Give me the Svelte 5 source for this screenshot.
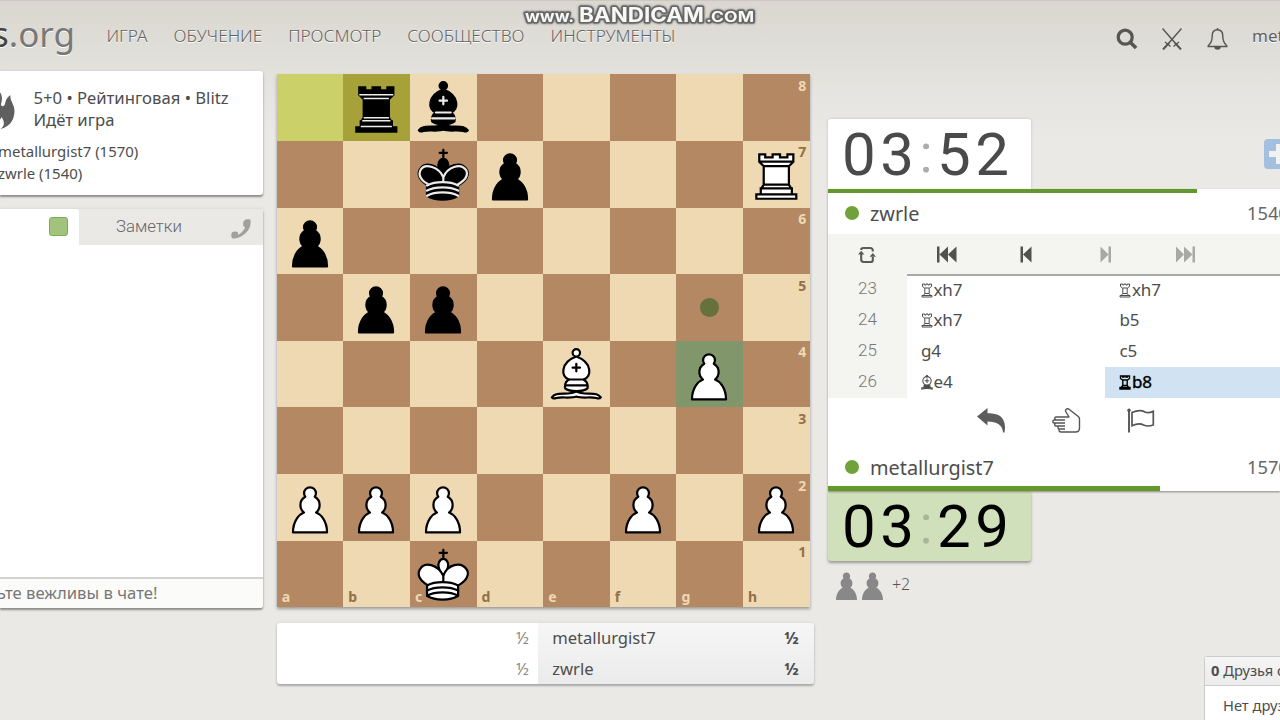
<script>
  const pawn = 'M22 9c-2.21 0-4 1.79-4 4 0 .89.29 1.71.78 2.38-1.95 1.12-3.28 3.21-3.28 5.62 0 2.03.94 3.84 2.41 5.03-3 1.06-7.41 5.55-7.41 13.47h23c0-7.92-4.41-12.41-7.41-13.47 1.47-1.19 2.41-3 2.41-5.03 0-2.41-1.33-4.5-3.28-5.62.49-.67.78-1.49.78-2.38 0-2.21-1.79-4-4-4z';
  const pieces = {
    b8: 'bR', c8: 'bB', c7: 'bK', d7: 'bP', h7: 'wR', a6: 'bP', b5: 'bP', c5: 'bP',
    e4: 'wB', g4: 'wP', a2: 'wP', b2: 'wP', c2: 'wP', f2: 'wP', h2: 'wP', c1: 'wK'
  };
  const files = ['a', 'b', 'c', 'd', 'e', 'f', 'g', 'h'];
  const squares = [8, 7, 6, 5, 4, 3, 2, 1].flatMap((r) =>
    files.map((f, i) => ({ key: f + r, dark: (i + r) % 2 === 1, file: r === 1 ? f : '', rank: f === 'h' ? r : '' }))
  );
  const nav = ['ИГРА', 'ОБУЧЕНИЕ', 'ПРОСМОТР', 'СООБЩЕСТВО', 'ИНСТРУМЕНТЫ'];
  const moves = [
    { n: 23, cells: [['R', 'xh7'], ['R', 'xh7']] },
    { n: 24, cells: [['R', 'xh7'], ['', 'b5']] },
    { n: 25, cells: [['', 'g4'], ['', 'c5']] },
    { n: 26, cells: [['B', 'e4'], ['R', 'b8']] }
  ];
</script>

<div class="page">
  <svg class="watermark" width="240" height="30" viewBox="0 0 240 30">
    <g class="wm">
      <text x="6" y="21.5" font-size="15" textLength="49" lengthAdjust="spacingAndGlyphs">www.</text>
      <text x="60" y="22" font-size="20" textLength="125" lengthAdjust="spacingAndGlyphs">BANDICAM</text>
      <text x="187" y="21.5" font-size="14" textLength="48" lengthAdjust="spacingAndGlyphs">.COM</text>
    </g>
  </svg>

  <header>
    <div class="logo"><b>s</b>.org</div>
    <nav>{#each nav as n}<span>{n}</span>{/each}</nav>
    <div class="tools">
      <svg width="22" height="22" viewBox="0 0 22 22" fill="none" stroke="#575652"><circle cx="9.2" cy="9.2" r="7" stroke-width="3.2"/><path d="M14.5 14.5l5.6 5.6" stroke-width="3.6"/></svg>
      <svg class="swords" width="20" height="22" viewBox="0 0 20 22" fill="none" stroke="#575652" stroke-width="1.3"><path d="M.5.5L14 16M19.500.5L6 16" stroke-width="1.5"/><path d="M13 15l6 6.500M7 15l-6 6.500" stroke-width="2"/><path d="M11.500 18.500l5.500-4.500M8.500 18.500L3 14"/></svg>
      <svg class="bell" width="22" height="22" viewBox="0 0 22 22" fill="none" stroke="#575652" stroke-width="1.400"><path d="M10.500 1.800c-3.500 0-5.300 2.700-5.300 6.200 0 5-1.200 7.500-4 9.700v.8h18.600v-.8c-2.800-2.200-4-4.700-4-9.700 0-3.500-1.800-6.200-5.300-6.200z"/><path d="M10.500 0v2M8 19c0 2.800 5 2.800 5 0z" fill="#575652"/></svg>
      <span class="me">metallurgist7</span>
    </div>
  </header>

  <main>
    <aside>
      <section class="box info">
        <div class="head">
          <svg width="35" height="44" viewBox="0 0 35 44"><path fill="#5f5f5f" d="M17 42C7 39 2 30 9 20c5-7 8-9 8-18 5 4 6 9 4 15 0 3 3 3 4 0 .8-3 1-6 5.500-9-1 6 4 9 4 16 0 9-5 16-14 18 3.500-3 5-6 1-12-.5 3-3 3-4 1-4 4-3 8-.5 11z"/></svg>
          <div><div>5+0 • Рейтинговая • Blitz</div><div>Идёт игра</div></div>
        </div>
        <div class="pl">metallurgist7 (1570)</div>
        <div class="pl">zwrle (1540)</div>
      </section>
      <section class="box chat">
        <div class="tabs">
          <div class="tab on"><i></i></div>
          <div class="tab off"><span>Заметки</span>
            <svg width="20" height="20" viewBox="0 0 20 20"><path fill="#a0a09f" d="M13.200 1.500C14.500.2 18 0 19.300.8c1.200 4-.5 9.500-4.600 13.300C10.500 18.300 5 20.200 1.200 19.200c-1.200-1.500-1.200-5 0-6 1.800-1 4.800-.8 6 .6.2 1-.1 1.700-.4 2.100 2.600-.9 6.400-4.800 7.400-8-.6.2-1.200.1-1.600-.3-.8-1.700-.6-4.800.6-6.100z"/></svg>
          </div>
        </div>
        <div class="log"></div>
        <div class="say"><span>Будьте вежливы в чате!</span></div>
      </section>
    </aside>

    <div class="center">
      <div class="board">
        {#each squares as s}
          <div class="sq" class:dark={s.dark} class:from={s.key === 'a8'} class:to={s.key === 'b8'} class:sel={s.key === 'g4'}>
            {#if s.rank}<span class="rank">{s.rank}</span>{/if}
            {#if s.file}<span class="file">{s.file}</span>{/if}
            {#if s.key === 'g5'}<i class="dest"></i>{/if}
            {#if pieces[s.key]}
              {@const p = pieces[s.key]}
              {@const w = p[0] === 'w'}
              <svg viewBox="0 0 45 45" fill={w ? '#fff' : '#000'} stroke="#000" stroke-width="1.5" stroke-linecap="round" stroke-linejoin="round">
                {#if p[1] === 'P'}
                  <path d={pawn} transform="translate(.3 0)" />
                {:else if p[1] === 'R'}
                  <g stroke-linecap="butt" stroke-linejoin="miter">
                    <path d="M9 39h27v-3H9v3zM12 36v-4h21v4H12zM11 14V9h4v2h5V9h5v2h5V9h4v5l-3 3H14l-3-3zM14 17h17v12.500H14zM31 29.500l1.500 2.500h-20l1.500-2.500M11 14h23" />
                    {#if !w}<path d="M12 35.500h21M13 31.500h19M14 29.500h17M14 16.500h17M11 14h23" fill="none" stroke="#ececec" stroke-width="1" />{/if}
                  </g>
                {:else if p[1] === 'B'}
                  <path d="M9 36c3.390-.97 10.110.43 13.500-2 3.390 2.430 10.110 1.030 13.500 2 0 0 1.650.54 3 2-.68.97-1.650.99-3 .5-3.390-.97-10.110.46-13.500-1-3.390 1.460-10.110.03-13.500 1-1.350.49-2.320.47-3-.5 1.350-1.940 3-2 3-2z" stroke-linecap="butt" />
                  <path d="M15 32c2.500 2.500 12.500 2.500 15 0 .5-1.500 0-2 0-2 0-2.500-2.500-4-2.500-4 5.500-1.500 6-11.500-5-15.500-11 4-10.500 14-5 15.500 0 0-2.500 1.500-2.500 4 0 0-.5.5 0 2zM25 8a2.500 2.500 0 1 1-5 0 2.500 2.500 0 1 1 5 0z" />
                  <path d="M17.500 26h10M15 30h15m-7.500-14.500v5M20 18h5" fill="none" stroke={w ? '#000' : '#ececec'} stroke-linejoin="miter" />
                {:else}
                  <path d="M22.500 11.630V6M20 8h5" fill="none" stroke-linejoin="miter" />
                  <path d="M22.500 25s4.500-7.500 3-10.500c0 0-1-2.500-3-2.500s-3 2.500-3 2.500c-1.500 3 3 10.500 3 10.500" stroke-linecap="butt" stroke-linejoin="miter" />
                  <path d="M11.500 37c5.500 3.500 15.500 3.500 21 0v-7s9-4.500 6-10.500c-4-6.500-13.500-3.500-16 4V27v-3.500c-3.500-7.500-13-10.500-16-4-3 6 5 10 5 10V37z" />
                  {#if !w}<path d="M32 29.500s8.500-4 6.030-9.650C34.150 14 25 18 22.500 24.500l.01 2.100-.01-2.100C20 18 9.906 14 6.997 19.850c-2.497 5.650 4.853 9 4.853 9" fill="none" stroke="#ececec" />{/if}
                  <path d="M11.500 30c5.500-3 15.500-3 21 0m-21 3.500c5.500-3 15.500-3 21 0m-21 3.500c5.500-3 15.500-3 21 0" fill="none" stroke={w ? '#000' : '#ececec'} />
                {/if}
              </svg>
            {/if}
          </div>
        {/each}
      </div>
      <div class="cross">
        <div class="past"><span>½</span><span>½</span></div>
        <div class="now">
          <div><span>metallurgist7</span><b>½</b></div>
          <div><span>zwrle</span><b>½</b></div>
        </div>
      </div>
    </div>

    <div class="side">
      <div class="toprow">
        <div class="clock">03<em>:</em>52</div>
        <svg width="30" height="30" viewBox="0 0 30 30"><rect width="30" height="30" rx="4" fill="#a3c0e0"/><path d="M12 5h6v7h7v6h-7v7h-6v-7H5v-6h7z" fill="#f2f2f1"/></svg>
      </div>
      <div class="table">
        <div class="bar top"><i></i></div>
        <div class="user"><i></i><span>zwrle</span><small>1540</small></div>
        <div class="replay">
          <div class="btns">
            <div class="flip"><svg width="18" height="18" viewBox="0 0 18 18" fill="none" stroke="#5a5a58" stroke-width="2.100"><path d="M3.200 4V3.500Q3.200 2 5.200 2h7q2.500 0 2.600 2.500v1M3.200 8v5.500q0 2.500 2.500 2.500h6.600q2.500 0 2.500-1.500V11"/><path d="M0 8.600h6.400L3.200 4.800zM11.600 10.800H18L14.800 7z" fill="#5a5a58" stroke="none"/></svg></div>
            <div class="ctl">
              <svg width="20" height="17" viewBox="0 0 20 17" fill="#51514f"><path d="M0 .5h2.500v16H0zM11 .5v16l-8.500-8zM19.500.5v16l-8.500-8z"/></svg>
              <svg width="20" height="17" viewBox="0 0 20 17" fill="#51514f"><path d="M4.500.5H7v16H4.500zM15.500.5v16l-8.500-8z"/></svg>
              <svg width="20" height="17" viewBox="0 0 20 17" fill="#a8a8a5"><path d="M15 .5h-2.500v16H15zM4.500.5v16l8-8z"/></svg>
              <svg width="20" height="17" viewBox="0 0 20 17" fill="#a8a8a5"><path d="M19 .5h-2.500v16H19zM8 .5v16l8.500-8zM0 .5v16l8-8z"/></svg>
              <span></span>
            </div>
          </div>
          {#each moves as m}
            <div class="mv">
              <span class="n">{m.n}</span>
              {#each m.cells as c, i}
                <span class="m" class:active={m.n === 26 && i === 1}>
                  {#if c[0] === 'R'}
                    <svg width="12" height="15" viewBox="0 0 12 15" fill="none" stroke="currentColor" stroke-width="1"><path d="M1.500 1v2.500l2 1.500h5l2-1.500V1H8.300v1H7V1H5v1H3.700V1zM3.800 5v5.500M8.200 5v5.500M3.800 10.500L2.500 12.200M8.200 10.500l1.300 1.700M3.800 10.500h4.400M1 12.500h10V14H1z"/></svg>
                  {:else if c[0] === 'B'}
                    <svg width="12" height="15" viewBox="0 0 12 15" fill="none" stroke="currentColor" stroke-width="1.100"><circle cx="6" cy="1.200" r=".7"/><circle cx="6" cy="5.800" r="4.200"/><path d="M6 3.500v4.600M3.700 5.800h4.600M3.300 9.500L3 11.600h6l-.3-2.100M3.300 10.600h5.400M.8 14v-1.300l5.200-.5 5.200.5V14L6 13.200z"/></svg>
                  {/if}{c[1]}</span>
              {/each}
            </div>
          {/each}
        </div>
        <div class="acts">
          <svg width="30" height="26" viewBox="0 0 30 26"><path fill="#5c5c5c" d="M0 8.500L10.500 0v5.200C20 4.700 30.500 8 27.500 24.500h-1.500C25.500 17 20 13.500 10.500 13.500V17.500z"/></svg>
          <svg width="30" height="26" viewBox="0 0 30 26" fill="none" stroke="#555" stroke-width="1.400" stroke-linejoin="round"><path d="M14.500 9H4.200q-1.500 0-1.500 1.500T4.200 12H13M4 12H2.200Q.8 12 .8 13.500T2.200 15H13M4 15q-1.400 0-1.400 1.500T4 18h9M7 18q-1 0-1 1.500T7 21h6M7 21q-.3 3 2 3h14.500q4 0 4-4v-9q0-1.500-1.200-2.500L17 1.200q-1.500-1-2.800 0-1.200 1-.2 2.800L17 9h-2.500"/></svg>
          <svg width="30" height="26" viewBox="0 0 30 26" fill="none" stroke="#555" stroke-width="1.500"><path d="M2 2v22.500" stroke-width="1.900"/><circle cx="2" cy="2.200" r="1.700" fill="#555" stroke="none"/><path d="M5 4.500C11 1.800 14.500 2 18 4c2.500 1.300 5 .8 8.300-.6V17c-4 1.500-7 1.300-9.700 0-3.500-1.800-6.600-1.500-11.600.7z" stroke-width="1.700"/></svg>
        </div>
        <div class="user low"><i></i><span>metallurgist7</span><small>1570</small></div>
        <div class="bar"><i></i></div>
      </div>
      <div class="clock run">03<em>:</em>29</div>
      <div class="taken">
        {#each [0, 1] as _}<svg width="21" height="28" viewBox="10.500 8.500 23 31" preserveAspectRatio="none"><path d={pawn} fill="#888" /></svg>{/each}
        <span>+2</span>
      </div>
    </div>
  </main>

  <div class="friends">
    <div class="ft"><b>0</b> Друзья онлайн</div>
    <div class="fb">Нет друзей онлайн</div>
  </div>
</div>

<style>
  :global(body) { overflow: hidden; }
  .page { position: relative; width: 1280px; height: 720px; overflow: hidden; box-sizing: border-box; border-top: 1px solid #cbc7c3; background: linear-gradient(#dbd7d0, #dfded8 50px, #e5e4e0 90px, #ebe9e6 135px, #ebe9e6); font-family: 'Noto Sans', sans-serif; color: #4d4d4d; white-space: nowrap; }
  .watermark { position: absolute; left: 519px; top: -1px; z-index: 2; }
  .wm { font-family: Inter, sans-serif; font-weight: 700; fill: #f8f8f6; stroke: #666; stroke-width: 3px; paint-order: stroke; stroke-linejoin: round; filter: drop-shadow(0 0 1px #555); }
  header { display: flex; height: 70px; color: #626160; text-shadow: 0 1px 0 #fff; }
  .logo { width: 75px; display: flex; justify-content: flex-end; font-size: 35px; line-height: 66px; color: #787878; }
  .logo b { font-weight: 400; color: #444; }
  nav { display: flex; gap: 26px; margin-left: 31.500px; font-size: 17.200px; line-height: 70px; font-weight: 340; }
  .tools { display: flex; margin-left: auto; width: 164px; padding-top: 27px; box-sizing: border-box; }
  .tools svg { flex: none; }
  .swords { margin-left: 24px; }
  .bell { margin-left: 25px; }
  .me { margin-left: 23px; font-size: 17px; line-height: 16px; }
  main { display: flex; }
  aside { width: 262.500px; flex: none; }
  .box { box-shadow: 0 2px 2px #8d8d8b, 0 0 3px #ccc; border-radius: 0 3px 3px 0; background: #fff; overflow: hidden; }
  .info { height: 124px; box-sizing: border-box; padding-top: 16px; font-size: 14.950px; line-height: 22px; }
  .head { display: flex; height: 44px; font-size: 16.700px; margin-bottom: 9px; }
  .head svg { margin: 0 18.500px 0 -20px; flex: none; }
  .pl { margin-left: -2px; }
  .chat { margin-top: 14px; height: 399px; display: flex; flex-direction: column; }
  .tabs { display: flex; height: 36px; background: #ebe9e6; }
  .on { width: 79px; background: #fff; border-radius: 0 3px 0 0; display: flex; justify-content: flex-end; align-items: center; }
  .on i { width: 17px; height: 17px; border: 1px solid #7cac54; border-radius: 3px; background: #a1c37c; margin: 0 11.500px 1px 0; }
  .off { flex: 1; display: flex; justify-content: space-between; align-items: center; padding: 0 12px 0 37px; font: 300 16.800px/32px Roboto, sans-serif; color: #666; }
  .off span { margin-top: -2px; }
  .off svg { margin-top: 3px; }
  .log { flex: 1; }
  .say { display: flex; height: 29px; border-top: 2px solid #d2d2d0; background: #fbfbf9; font-size: 16.700px; line-height: 27px; color: #777; justify-content: flex-end; padding-right: 105px; }
  .center { margin-left: 14.200px; width: 537px; }
  .board { width: 533px; height: 533px; margin-top: 3.300px; display: grid; grid-template: repeat(8, 1fr) / repeat(8, 1fr); box-shadow: 0 2px 3px #999; }
  .sq { position: relative; background: #eed9b3; color: #927048; min-width: 0; min-height: 0; }
  .dark { background: #b38863; color: #eed9b3; }
  .from { background: #cbd069; }
  .to { background: #a7a139; }
  .sel { background: #81976b; }
  .sq svg { display: block; width: 100%; height: 100%; position: relative; }
  .rank, .file { position: absolute; font-weight: 700; font-size: 14px; line-height: 16px; }
  .rank { right: 3.500px; top: 3.500px; }
  .file { left: 5px; bottom: 2px; }
  .dest { position: absolute; left: 24px; top: 24px; width: 18.500px; height: 18.500px; border-radius: 50%; background: #66713c; }
  .cross { display: flex; margin-top: 15.700px; height: 61px; border-radius: 3px; overflow: hidden; box-shadow: 0 2px 2px #aaa, 0 0 3px #ccc; font-size: 16.600px; line-height: 31px; background: #fff; }
  .past { width: 252px; padding-right: 9px; display: flex; flex-direction: column; align-items: flex-end; color: #888; }
  .past, .now { margin-top: -1px; padding-bottom: 1px; }
  .now { flex: 1; background: linear-gradient(#f6f6f6, #ebebeb); padding: 0 15px 1px 14.500px; }
  .now div { display: flex; justify-content: space-between; }
  .side { margin-left: 14.300px; width: 452px; margin-top: 48px; }
  .toprow { display: flex; justify-content: space-between; align-items: center; }
  .toprow svg { flex: none; margin-right: -14px; }
  .clock { width: 203px; height: 70px; box-sizing: border-box; padding-left: 14px; background: #fff; border-radius: 3px 3px 0 0; box-shadow: 0 0 3px #bbb; font: 400 60px/71px Roboto, sans-serif; letter-spacing: 4.500px; color: #4a4a4a; }
  .clock em { font-style: normal; opacity: .45; position: relative; top: -3.500px; font-size: 54px; margin-left: 1px; }
  .run { background: #cfe0bb; color: #000; border-radius: 0 0 3px 3px; box-shadow: 0 2px 3px #999; }
  .run em { opacity: .18; }
  .table { position: relative; background: #fff; box-shadow: 0 1px 2px #888; height: 301.500px; display: flex; flex-direction: column; }
  .bar i { display: block; height: 5px; width: 332px; background: #65982b; }
  .bar.top i { width: 369px; height: 4px; }
  .user { display: flex; align-items: center; height: 41px; padding-left: 17px; font-size: 19.850px; }
  .user span { margin-top: -1px; }
  .user i { width: 14px; height: 14px; border-radius: 50%; background: #70a23b; margin: -1px 11px 0 0; }
  .user small { margin: -2px 0 0 auto; font-size: 18.300px; font-weight: 370; width: 33px; color: #666; }
  .low { margin-top: auto; height: 36px; }
  .btns { display: flex; height: 42px; background: #f4f4f1; }
  .flip { width: 79px; display: flex; align-items: center; justify-content: center; }
  .ctl { flex: 1; padding-top: 1px; margin-right: -25px; display: grid; grid-template-columns: repeat(5, 1fr); align-items: center; justify-items: center; border-bottom: 2px solid #a9a9a5; }
  .mv { display: flex; height: 31px; line-height: 29px; font-size: 17px; }
  .mv:nth-child(2) { height: 29px; }
  .mv:nth-child(2) .n { line-height: 25px; }
  .n { width: 79px; flex: none; background: #f4f4f1; text-align: center; font: 300 17px/28px Roboto, sans-serif; color: #777; }
  .m { width: 184.500px; flex: none; padding: 0 0 2px 14px; box-sizing: border-box; width: 198.500px; display: flex; align-items: center; letter-spacing: -.15px; }
  .m svg { flex: none; margin-right: .5px; margin-top: 1px; }
  .active { background: #d1e3f2; color: #000; -webkit-text-stroke: .4px #000; }
  .active svg { stroke-width: 1.400; }
  .acts { display: flex; gap: 45px; margin: 10px 0 0 149px; }
  .taken { display: flex; align-items: center; gap: 5px; padding: 11px 0 0 8px; font: 300 16px/22px 'Noto Sans', sans-serif; color: #555; }
  .taken span { margin-left: 4px; margin-top: -4px; }
  .friends { position: absolute; left: 1204px; top: 655px; width: 180px; height: 80px; border: 1px solid #ccc; border-radius: 3px 0 0 0; background: #fff; font-size: 14.700px; }
  .ft { height: 28px; line-height: 27px; padding-left: 6px; border-bottom: 1px solid #ccc; background: linear-gradient(#f5f5f5, #ececec); }
  .fb { padding-left: 18px; line-height: 38px; }
</style>
